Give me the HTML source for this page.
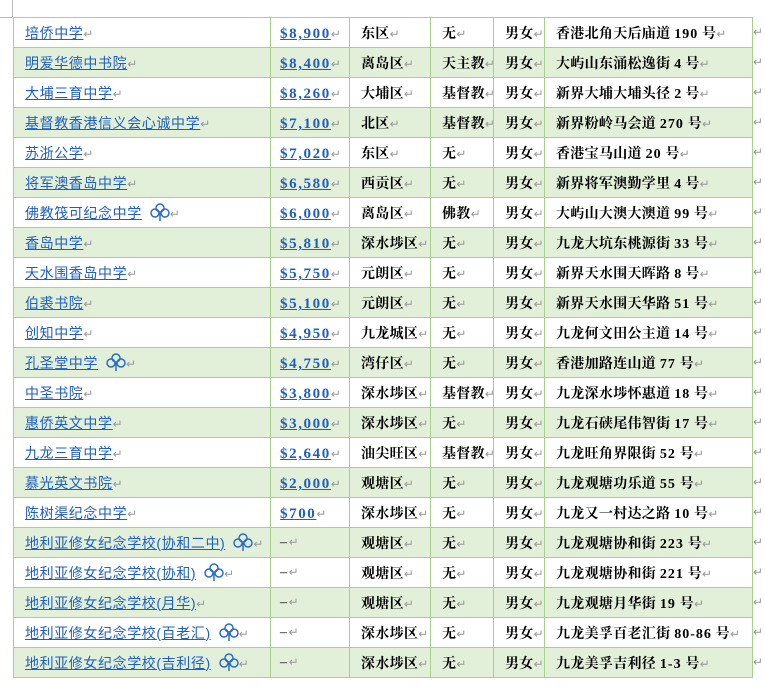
<!DOCTYPE html>
<html><head><meta charset="utf-8"><style>
body{margin:0;width:765px;height:687px;background:#fff;overflow:hidden;position:relative;font-family:"Liberation Serif","Noto Serif CJK SC","Noto Sans CJK SC",serif}
table{position:absolute;left:13px;top:17px;border-collapse:collapse;table-layout:fixed;width:739px}
td{border:1px solid #a8d08d;height:29px;padding:0 0 0 11px;font-size:14px;white-space:nowrap;overflow:hidden;font-weight:bold;color:#000;letter-spacing:0.3px;box-sizing:border-box}
tr{height:30px}
tr:nth-child(even) td{background:#e2efd9}
td.n{font-family:"Liberation Sans","Noto Sans CJK SC",sans-serif;font-weight:normal;color:#1f5fbf;text-decoration:underline;letter-spacing:0.6px}
td.m{color:#1f5fbf;text-decoration:underline;padding-left:9px;padding-top:4px;font-size:15px;letter-spacing:1.6px}
td.d{font-weight:normal;text-decoration:none;color:#000;font-size:14px;padding-top:0}
i{font-style:normal;color:#999;font-weight:normal;text-decoration:none;display:inline-block;font-size:12px;letter-spacing:0}
.r{position:absolute;left:753px;color:#999;font-size:12px}
.c{position:absolute;left:0;top:17px;width:12px;border-top:1px solid #bbb}
.v{position:absolute;left:12px;top:0;height:17px;border-left:1px solid #bbb}
svg{vertical-align:-3px;margin-left:8px}
b{font-weight:bold;letter-spacing:1px}
</style></head><body>
<div class="c"></div><div class="v"></div>
<table>
<colgroup><col style="width:257px"><col style="width:79px"><col style="width:81px"><col style="width:63px"><col style="width:51px"><col style="width:208px"></colgroup>
<tr><td class="n">培侨中学<i>↵</i></td><td class="m">$8,900<i>↵</i></td><td>东区<i>↵</i></td><td>无<i>↵</i></td><td>男女<i>↵</i></td><td>香港北角天后庙道 <b>190</b> 号<i>↵</i></td></tr>
<tr><td class="n">明爱华德中书院<i>↵</i></td><td class="m">$8,400<i>↵</i></td><td>离岛区<i>↵</i></td><td>天主教<i>↵</i></td><td>男女<i>↵</i></td><td>大屿山东涌松逸街 4 号<i>↵</i></td></tr>
<tr><td class="n">大埔三育中学<i>↵</i></td><td class="m">$8,260<i>↵</i></td><td>大埔区<i>↵</i></td><td>基督教<i>↵</i></td><td>男女<i>↵</i></td><td>新界大埔大埔头径 2 号<i>↵</i></td></tr>
<tr><td class="n">基督教香港信义会心诚中学<i>↵</i></td><td class="m">$7,100<i>↵</i></td><td>北区<i>↵</i></td><td>基督教<i>↵</i></td><td>男女<i>↵</i></td><td>新界粉岭马会道 <b>270</b> 号<i>↵</i></td></tr>
<tr><td class="n">苏浙公学<i>↵</i></td><td class="m">$7,020<i>↵</i></td><td>东区<i>↵</i></td><td>无<i>↵</i></td><td>男女<i>↵</i></td><td>香港宝马山道 <b>20</b> 号<i>↵</i></td></tr>
<tr><td class="n">将军澳香岛中学<i>↵</i></td><td class="m">$6,580<i>↵</i></td><td>西贡区<i>↵</i></td><td>无<i>↵</i></td><td>男女<i>↵</i></td><td>新界将军澳勤学里 4 号<i>↵</i></td></tr>
<tr><td class="n">佛教筏可纪念中学<svg width="20" height="18" viewBox="0 0 20 18"><g fill="none" stroke="#2b6cc4" stroke-width="1.5"><circle cx="10" cy="5" r="4"/><circle cx="5" cy="10" r="4"/><circle cx="15" cy="10" r="4"/><path d="M10 10v8"/></g></svg><i>↵</i></td><td class="m">$6,000<i>↵</i></td><td>离岛区<i>↵</i></td><td>佛教<i>↵</i></td><td>男女<i>↵</i></td><td>大屿山大澳大澳道 <b>99</b> 号<i>↵</i></td></tr>
<tr><td class="n">香岛中学<i>↵</i></td><td class="m">$5,810<i>↵</i></td><td>深水埗区<i>↵</i></td><td>无<i>↵</i></td><td>男女<i>↵</i></td><td>九龙大坑东桃源街 <b>33</b> 号<i>↵</i></td></tr>
<tr><td class="n">天水围香岛中学<i>↵</i></td><td class="m">$5,750<i>↵</i></td><td>元朗区<i>↵</i></td><td>无<i>↵</i></td><td>男女<i>↵</i></td><td>新界天水围天晖路 8 号<i>↵</i></td></tr>
<tr><td class="n">伯裘书院<i>↵</i></td><td class="m">$5,100<i>↵</i></td><td>元朗区<i>↵</i></td><td>无<i>↵</i></td><td>男女<i>↵</i></td><td>新界天水围天华路 <b>51</b> 号<i>↵</i></td></tr>
<tr><td class="n">创知中学<i>↵</i></td><td class="m">$4,950<i>↵</i></td><td>九龙城区<i>↵</i></td><td>无<i>↵</i></td><td>男女<i>↵</i></td><td>九龙何文田公主道 <b>14</b> 号<i>↵</i></td></tr>
<tr><td class="n">孔圣堂中学<svg width="20" height="18" viewBox="0 0 20 18"><g fill="none" stroke="#2b6cc4" stroke-width="1.5"><circle cx="10" cy="5" r="4"/><circle cx="5" cy="10" r="4"/><circle cx="15" cy="10" r="4"/><path d="M10 10v8"/></g></svg><i>↵</i></td><td class="m">$4,750<i>↵</i></td><td>湾仔区<i>↵</i></td><td>无<i>↵</i></td><td>男女<i>↵</i></td><td>香港加路连山道 <b>77</b> 号<i>↵</i></td></tr>
<tr><td class="n">中圣书院<i>↵</i></td><td class="m">$3,800<i>↵</i></td><td>深水埗区<i>↵</i></td><td>基督教<i>↵</i></td><td>男女<i>↵</i></td><td>九龙深水埗怀惠道 <b>18</b> 号<i>↵</i></td></tr>
<tr><td class="n">惠侨英文中学<i>↵</i></td><td class="m">$3,000<i>↵</i></td><td>深水埗区<i>↵</i></td><td>无<i>↵</i></td><td>男女<i>↵</i></td><td>九龙石硖尾伟智街 <b>17</b> 号<i>↵</i></td></tr>
<tr><td class="n">九龙三育中学<i>↵</i></td><td class="m">$2,640<i>↵</i></td><td>油尖旺区<i>↵</i></td><td>基督教<i>↵</i></td><td>男女<i>↵</i></td><td>九龙旺角界限街 <b>52</b> 号<i>↵</i></td></tr>
<tr><td class="n">慕光英文书院<i>↵</i></td><td class="m">$2,000<i>↵</i></td><td>观塘区<i>↵</i></td><td>无<i>↵</i></td><td>男女<i>↵</i></td><td>九龙观塘功乐道 <b>55</b> 号<i>↵</i></td></tr>
<tr><td class="n">陈树渠纪念中学<i>↵</i></td><td class="m">$700<i>↵</i></td><td>深水埗区<i>↵</i></td><td>无<i>↵</i></td><td>男女<i>↵</i></td><td>九龙又一村达之路 <b>10</b> 号<i>↵</i></td></tr>
<tr><td class="n">地利亚修女纪念学校(协和二中)<svg width="20" height="18" viewBox="0 0 20 18"><g fill="none" stroke="#2b6cc4" stroke-width="1.5"><circle cx="10" cy="5" r="4"/><circle cx="5" cy="10" r="4"/><circle cx="15" cy="10" r="4"/><path d="M10 10v8"/></g></svg><i>↵</i></td><td class="m d">–<i>↵</i></td><td>观塘区<i>↵</i></td><td>无<i>↵</i></td><td>男女<i>↵</i></td><td>九龙观塘协和街 <b>223</b> 号<i>↵</i></td></tr>
<tr><td class="n">地利亚修女纪念学校(协和)<svg width="20" height="18" viewBox="0 0 20 18"><g fill="none" stroke="#2b6cc4" stroke-width="1.5"><circle cx="10" cy="5" r="4"/><circle cx="5" cy="10" r="4"/><circle cx="15" cy="10" r="4"/><path d="M10 10v8"/></g></svg><i>↵</i></td><td class="m d">–<i>↵</i></td><td>观塘区<i>↵</i></td><td>无<i>↵</i></td><td>男女<i>↵</i></td><td>九龙观塘协和街 <b>221</b> 号<i>↵</i></td></tr>
<tr><td class="n">地利亚修女纪念学校(月华)<i>↵</i></td><td class="m d">–<i>↵</i></td><td>观塘区<i>↵</i></td><td>无<i>↵</i></td><td>男女<i>↵</i></td><td>九龙观塘月华街 <b>19</b> 号<i>↵</i></td></tr>
<tr><td class="n">地利亚修女纪念学校(百老汇)<svg width="20" height="18" viewBox="0 0 20 18"><g fill="none" stroke="#2b6cc4" stroke-width="1.5"><circle cx="10" cy="5" r="4"/><circle cx="5" cy="10" r="4"/><circle cx="15" cy="10" r="4"/><path d="M10 10v8"/></g></svg><i>↵</i></td><td class="m d">–<i>↵</i></td><td>深水埗区<i>↵</i></td><td>无<i>↵</i></td><td>男女<i>↵</i></td><td>九龙美孚百老汇街 <b>80-86</b> 号<i>↵</i></td></tr>
<tr><td class="n">地利亚修女纪念学校(吉利径)<svg width="20" height="18" viewBox="0 0 20 18"><g fill="none" stroke="#2b6cc4" stroke-width="1.5"><circle cx="10" cy="5" r="4"/><circle cx="5" cy="10" r="4"/><circle cx="15" cy="10" r="4"/><path d="M10 10v8"/></g></svg><i>↵</i></td><td class="m d">–<i>↵</i></td><td>深水埗区<i>↵</i></td><td>无<i>↵</i></td><td>男女<i>↵</i></td><td>九龙美孚吉利径 <b>1-3</b> 号<i>↵</i></td></tr>
</table>
<div class="r" style="top:25px">↵</div><div class="r" style="top:55px">↵</div><div class="r" style="top:85px">↵</div><div class="r" style="top:115px">↵</div><div class="r" style="top:145px">↵</div><div class="r" style="top:175px">↵</div><div class="r" style="top:205px">↵</div><div class="r" style="top:235px">↵</div><div class="r" style="top:265px">↵</div><div class="r" style="top:295px">↵</div><div class="r" style="top:325px">↵</div><div class="r" style="top:355px">↵</div><div class="r" style="top:385px">↵</div><div class="r" style="top:415px">↵</div><div class="r" style="top:445px">↵</div><div class="r" style="top:475px">↵</div><div class="r" style="top:505px">↵</div><div class="r" style="top:535px">↵</div><div class="r" style="top:565px">↵</div><div class="r" style="top:595px">↵</div><div class="r" style="top:625px">↵</div><div class="r" style="top:655px">↵</div>
</body></html>
